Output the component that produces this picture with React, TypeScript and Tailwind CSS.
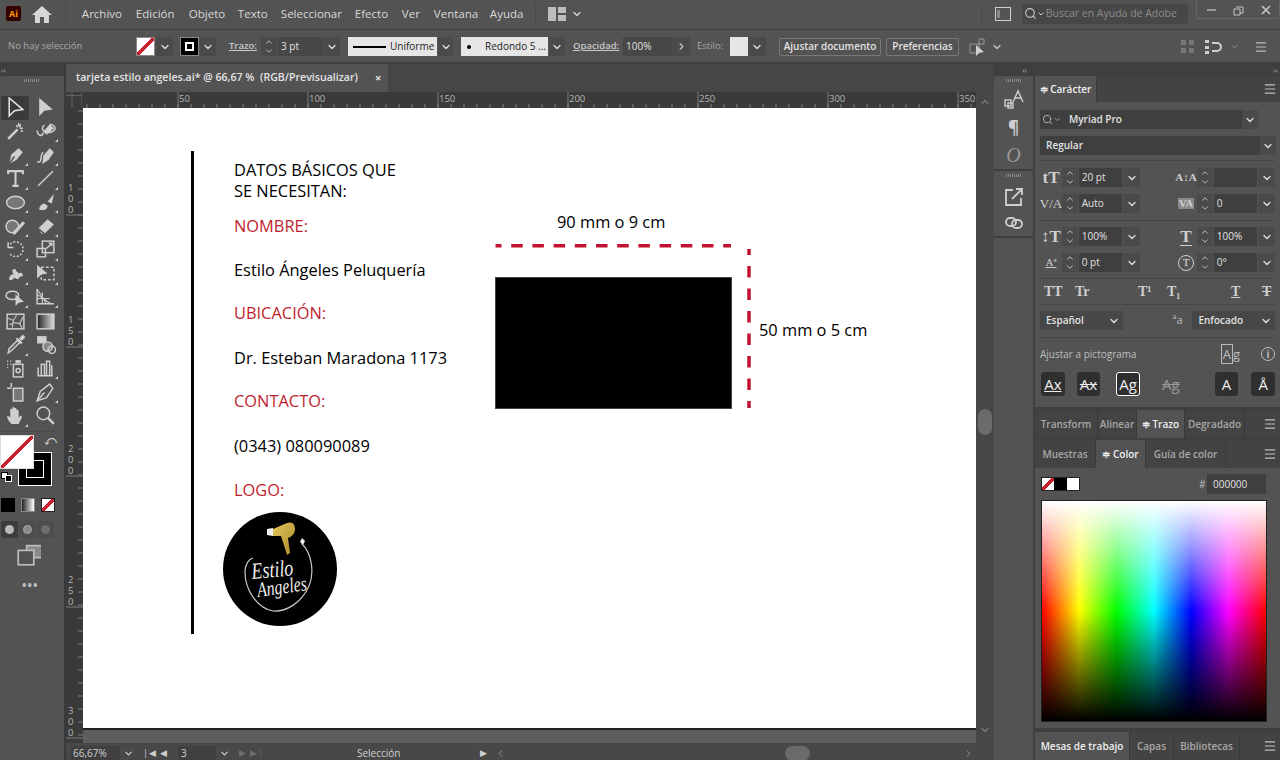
import React from "react";
import { ChevronDown, ChevronUp, ChevronRight, ChevronLeft, Menu, Search } from "lucide-react";

const menus = [
  ["Archivo", 54],
  ["Edición", 53],
  ["Objeto", 49],
  ["Texto", 43],
  ["Seleccionar", 74],
  ["Efecto", 47],
  ["Ver", 32],
  ["Ventana", 56],
  ["Ayuda", 45],
] as const;

function Chev({ className = "w-[16px]" }: { className?: string }) {
  return (
    <div className={`flex h-[19px] items-center justify-center bg-[#4a4a4a] ${className}`}>
      <ChevronDown size={12} strokeWidth={2.5} className="text-[#e0e0e0]" />
    </div>
  );
}

function Arrows() {
  return (
    <div className="flex h-full w-[16px] flex-col items-center justify-center bg-[#4a4a4a] text-[#d6d6d6]">
      <ChevronUp size={10} strokeWidth={2} className="-mb-[1px]" />
      <ChevronDown size={10} strokeWidth={2} />
    </div>
  );
}

function Stepper({ value }: { value: string }) {
  return (
    <div className="flex h-[19px] w-[78px] items-center gap-px text-[10px] text-[#e2e2e2]">
      <Arrows />
      <div className="flex h-full w-[44px] items-center bg-[#3f3f3f] pl-[3px]">{value}</div>
      <Chev className="w-[17px]" />
    </div>
  );
}

function Ico({ children, size = 20, vb = 20 }: { children: React.ReactNode; size?: number; vb?: number }) {
  return (
    <svg width={size} height={size} viewBox={`0 0 ${vb} ${vb}`} fill="none" stroke="#cfcfcf" strokeWidth="1.4">
      {children}
    </svg>
  );
}

const solid = { fill: "#cfcfcf", stroke: "none" };

const tools: { icon: React.ReactNode; more?: boolean; active?: boolean }[] = [
  { active: true, icon: <path d="M4 1 L4 18 L9 13 L17 12 Z" stroke="#e8e8e8" /> },
  { icon: <path d="M4 1 L4 18 L9 13 L17 12 Z" {...solid} /> },
  { icon: <><path d="M3 17 L12 8" strokeWidth="2.4" /><path d="M13 2v3M15 3l-1 3M17 7h-3M11 4l1 2M17 10l-2-1" /></> },
  { more: true, icon: <><path d="M2 9c1 6 5 6 6 2" /><path d="M8 10 L14 3 L18 7 L11 13 Z" {...solid} /><path d="M9 4a6 4 0 1 0 5-1" /></> },
  { more: true, icon: <><path d="M4 18 L6 9 L13 3 L17 7 L11 14 Z" {...solid} /><path d="M4 18 L9 11" stroke="#535353" /></> },
  { more: true, icon: <><path d="M2 16c6 2 2-8 6-9" /><path d="M7 18 L8 10 L14 3 L18 7 L13 14 Z" {...solid} /></> },
  { more: true, icon: <path d="M3 6V3h14v3M10 3v14M7 17h6" strokeWidth="2" /> },
  { more: true, icon: <path d="M3 17 L17 3" /> },
  { more: true, icon: <ellipse cx="10" cy="10" rx="8.5" ry="6" fill="#777" /> },
  { more: true, icon: <><path d="M12 9 L18 2 L16 11 Z" {...solid} /><path d="M4 17c0-4 3-6 5-6l3 2c0 3-3 5-8 4z" {...solid} /></> },
  { more: true, icon: <><circle cx="7" cy="10" r="6" fill="#777" /><path d="M8 17 L18 6" strokeWidth="3" /></> },
  { more: true, icon: <><path d="M3 12 L12 3 L18 8 L9 17 H6 Z" {...solid} /><path d="M3 12 L9 17" stroke="#535353" /></> },
  { more: true, icon: <><path d="M5 5a7 7 0 1 1-1 8" strokeDasharray="2 1.5" /><path d="M3 3v5h5" /></> },
  { more: true, icon: <><rect x="7" y="2" width="11" height="11" /><rect x="2" y="9" width="8" height="8" /><path d="M11 9l5-5M13 4h3v3" /></> },
  { more: true, icon: <path d="M4 16c0-5 2-4 4-6-2-2-1-5 2-4 1 3 2 2 3 4 3-2 4 0 4 3-2-1-3 0-4 2-2 1-3-1-4-1-1 1-3 3-5 2z" {...solid} /> },
  { more: true, icon: <><rect x="6" y="4" width="12" height="12" strokeDasharray="2.5 2" /><path d="M2 2 L2 15 L6 11 L12 10 Z" {...solid} /></> },
  { more: true, icon: <><ellipse cx="7" cy="8" rx="6" ry="4" /><path d="M10 7 L10 18 L13 15 L18 14 Z" {...solid} /></> },
  { more: true, icon: <><path d="M2 2v14h16" /><path d="M2 2l9 14M2 7l13 9M7 5v11M2 11h12" strokeWidth="1" /></> },
  { icon: <><rect x="2" y="3" width="16" height="14" /><path d="M3 7l5 2 3-5M8 9l-1 7M8 11l6 1 3-6M14 12l2 4M4 13l3-1" strokeWidth="1" /></> },
  { icon: <><defs><linearGradient id="tg"><stop stopColor="#222" /><stop offset="1" stopColor="#ddd" /></linearGradient></defs><rect x="2" y="3" width="16" height="14" fill="url(#tg)" /></> },
  { more: true, icon: <><path d="M3 18 L4 14 L12 6 L14 8 L6 16 Z" /><path d="M11 4l5 5M14 5l3-3 1 1-3 3" strokeWidth="2" /></> },
  { icon: <><rect x="2" y="2" width="9" height="7" {...solid} /><circle cx="12" cy="12" r="4.5" fill="#888" /><circle cx="16" cy="15" r="3.5" /></> },
  { icon: <><rect x="8" y="6" width="9" height="12" /><circle cx="12.5" cy="12" r="2" /><rect x="10" y="2" width="5" height="3" {...solid} /><path d="M2 3h1M5 3h1M2 6h1M5 6h1M2 9h1" /></> },
  { more: true, icon: <path d="M3 9v8h14M6 17V6h3v11M11 17V3h3v14M16 17V7" /> },
  { icon: <><path d="M8 6h9v12H8z" fill="#777" /><path d="M2 6h4M6 1v4" /></> },
  { more: true, icon: <><path d="M2 18 L5 9 L14 2 L17 6 L11 15 Z" /><path d="M2 18 L9 10" /></> },
  { more: true, icon: <path d="M6 18c-2-2-4-5-4-7 1-1 2 0 3 1V4c1-1 2 0 2 1V2.5c1-1 2-.5 2 .5 1-.5 2 0 2 1v1c1-1 2 0 2 1v6l2-2c1 0 1 1 1 2l-3 6z" {...solid} /> },
  { icon: <><circle cx="8" cy="8" r="6" /><path d="M12 12 L18 18" strokeWidth="2.2" /></> },
];

function Toolbar() {
  return (
    <div className="flex h-full w-[66px] shrink-0 flex-col border-r-2 border-[#3a3a3a] bg-[#535353]">
      <div className="flex h-[12px] items-center bg-[#3f3f3f] pl-[1px] text-[8px] leading-none text-[#bbb]">‹‹</div>
      <div className="mx-auto mt-[3px] h-[3px] w-[16px] bg-[repeating-linear-gradient(to_right,#8a8a8a_0,#8a8a8a_1px,transparent_1px,transparent_2px)]" />
      <div className="ml-[1px] mt-[14px] grid w-[58px] grid-cols-2 gap-x-[2px]">
        {tools.map((t, i) => (
          <div
            key={i}
            className={`relative flex h-[23.7px] w-[28px] items-center justify-center rounded-[2px] ${t.active ? "bg-[#3a3a3a]" : ""}`}
          >
            <Ico size={21}>{t.icon}</Ico>
            {t.more && <span className="absolute bottom-[1px] right-[1px] h-0 w-0 border-b-[3px] border-l-[3px] border-b-[#cfcfcf] border-l-transparent" />}
          </div>
        ))}
      </div>
      {/* fill and stroke */}
      <div className="relative mt-[3px] h-[62px] w-[60px] border-t border-[#4a4a4a]">
        <div className="absolute left-[18px] top-[20px] flex h-[34px] w-[34px] items-center justify-center border border-white bg-black">
          <div className="h-[18px] w-[18px] border border-white" />
        </div>
        <div className="absolute left-0 top-[3px] h-[34px] w-[34px] border border-[#ddd] bg-[linear-gradient(to_top_left,#fff_46%,#c8202f_46%,#c8202f_54%,#fff_54%)]" />
        <span className="absolute left-[44px] top-[3px] text-[12px] leading-none text-[#ddd]">⤺</span>
        <div className="absolute left-[1px] top-[40px] h-[7px] w-[7px] border border-black bg-white" />
        <div className="absolute left-[5px] top-[43px] h-[7px] w-[7px] border border-white bg-black" />
      </div>
      <div className="ml-[1px] mt-[5px] flex gap-[6px]">
        <div className="h-[14px] w-[14px] bg-black" />
        <div className="h-[14px] w-[14px] border border-[#888] bg-[linear-gradient(to_right,#222,#fff)]" />
        <div className="h-[14px] w-[14px] border border-[#222] bg-[linear-gradient(to_top_left,#fff_40%,#c8202f_40%,#c8202f_60%,#fff_60%)]" />
      </div>
      <div className="ml-[1px] mt-[9px] flex gap-px">
        <div className="flex h-[17px] w-[17px] items-center justify-center rounded-[2px] bg-[#3c3c3c]"><div className="h-[9px] w-[9px] rounded-full bg-[#bbb]" /></div>
        <div className="flex h-[17px] w-[17px] items-center justify-center rounded-[2px] bg-[#4d4d4d]"><div className="h-[9px] w-[9px] rounded-full border border-[#aaa] bg-[#888]" /></div>
        <div className="flex h-[17px] w-[17px] items-center justify-center rounded-[2px] bg-[#4d4d4d]"><div className="h-[9px] w-[9px] rounded-full bg-[#6e6e6e]" /></div>
      </div>
      <div className="ml-[17px] mt-[4px]">
        <Ico size={24}>
          <rect x="8" y="3" width="15" height="10" fill="#8a8a8a" stroke="#bdbdbd" />
          <rect x="1" y="7" width="13" height="12" fill="#535353" stroke="#bdbdbd" />
        </Ico>
      </div>
      <div className="ml-[22px] mt-[14px] text-[12px] font-bold leading-none tracking-[1px] text-[#bdbdbd]">•••</div>
    </div>
  );
}

function TopRuler() {
  const labels = [50, 100, 150, 200, 250, 300, 350];
  const ticks = Array.from({ length: 70 }, (_, i) => i * 13 + 5);
  return (
    <svg width="894" height="16" className="block shrink-0">
      {ticks.map((x) => (
        <line key={x} x1={x} x2={x} y1="12" y2="16" stroke="#7c7c7c" />
      ))}
      {labels.map((l, i) => (
        <g key={l}>
          <line x1={96 + i * 130} x2={96 + i * 130} y1="0" y2="16" stroke="#7c7c7c" />
          <text x={97 + i * 130} y="10" fontSize="9.5" fill="#b5b5b5">{l}</text>
        </g>
      ))}
    </svg>
  );
}

function LeftRuler() {
  const marks = [
    ["1", "0", "0", 107],
    ["1", "5", "0", 239],
    ["2", "0", "0", 368],
    ["2", "5", "0", 499],
    ["3", "0", "0", 630],
  ] as const;
  return (
    <svg width="17" height="635" className="block shrink-0 bg-[#3a3a3a]">
      {Array.from({ length: 49 }, (_, i) => i * 13 + 3).map((y) => (
        <line key={y} x1="12" x2="17" y1={y} y2={y} stroke="#7c7c7c" />
      ))}
      {marks.map((m) => (
        <g key={m[3]}>
          <line x1="0" x2="17" y1={m[3]} y2={m[3]} stroke="#7c7c7c" />
          {[0, 1, 2].map((d) => (
            <text key={d} x="2" y={m[3] - 24 + d * 11} fontSize="9.5" fill="#b5b5b5">{m[d]}</text>
          ))}
        </g>
      ))}
    </svg>
  );
}

function Logo() {
  return (
    <svg width="114" height="114" viewBox="0 0 114 114" className="absolute left-[140px] top-[404px]">
      <defs>
        <linearGradient id="gold" x1="0" y1="0" x2="1" y2="1">
          <stop stopColor="#e2c65a" />
          <stop offset="1" stopColor="#a98a2c" />
        </linearGradient>
      </defs>
      <circle cx="57" cy="57" r="57" fill="#000" />
      <path d="M50 17 L64 11 C70 9 72 13 72 17 C72 22 68 25 65 26 L67 41 L64 43 C62 36 60 30 58 24 L50 24 Z" fill="url(#gold)" />
      <path d="M44 17 L50 16 L50 24 L44 23 Z" fill="#eee" />
      <path d="M79 32 C88 40 92 60 86 74 C78 92 62 100 50 99 C34 96 22 78 22 60 C22 52 26 47 30 46" stroke="#c8c8c8" strokeWidth="1.2" fill="none" />
      <path d="M77 30 L79 26 L82 29 L80 33 Z" fill="#eee" />
      <text x="29" y="67" fontSize="23" fontStyle="italic" fill="#eee" fontFamily="'Liberation Serif', serif" textLength="42" lengthAdjust="spacingAndGlyphs" transform="rotate(-5 29 67)">Estilo</text>
      <text x="35" y="85" fontSize="21" fontStyle="italic" fill="#eee" fontFamily="'Liberation Serif', serif" textLength="50" lengthAdjust="spacingAndGlyphs" transform="rotate(-8 35 85)">Angeles</text>
    </svg>
  );
}

const labelCls = "absolute whitespace-nowrap text-[16.4px] leading-[22px]";

function Artboard() {
  const items: [string, number, boolean][] = [
    ["DATOS BÁSICOS QUE", 51, false],
    ["SE NECESITAN:", 72, false],
    ["NOMBRE:", 107, true],
    ["Estilo Ángeles Peluquería", 151, false],
    ["UBICACIÓN:", 194, true],
    ["Dr. Esteban Maradona 1173", 239, false],
    ["CONTACTO:", 282, true],
    ["(0343) 080090089", 327, false],
    ["LOGO:", 371, true],
  ];
  return (
    <div className="relative h-[622px] w-full shrink-0 overflow-hidden border-b-2 border-[#222] bg-white text-black">
      <div className="absolute left-[108px] top-[43px] h-[483px] w-[3px] bg-black" />
      {items.map(([t, top, red]) => (
        <div key={t} className={`${labelCls} left-[151px] ${red ? "text-[#bf1e2e]" : "text-black"}`} style={{ top }}>
          {t}
        </div>
      ))}
      <div className={`${labelCls} left-[474px] top-[103px]`}>90 mm o 9 cm</div>
      <div className={`${labelCls} left-[676px] top-[211px]`}>50 mm o 5 cm</div>
      <svg width="260" height="166" className="absolute left-[410px] top-[135px]">
        <line x1="2.5" x2="238" y1="2.7" y2="2.7" stroke="#c1122f" strokeWidth="3.5" strokeDasharray="11.5 9.7" strokeDashoffset="5.5" />
        <line x1="256" x2="256" y1="6" y2="165" stroke="#c1122f" strokeWidth="3.5" strokeDasharray="11.5 11" strokeDashoffset="5.5" />
      </svg>
      <div className="absolute left-[412px] top-[169px] h-[132px] w-[237px] border border-[#444] bg-black" />
      <Logo />
    </div>
  );
}

function Document() {
  return (
    <div className="flex h-full w-[928px] shrink-0 flex-col">
      <div className="flex h-[28px] shrink-0 items-stretch bg-[#464646]">
        <div className="flex w-[322px] items-center bg-[#535353] pl-[10px] text-[10.6px] font-semibold text-[#e4e4e4]">
          <span className="w-[299px] whitespace-pre">tarjeta estilo angeles.ai* @ 66,67 %  (RGB/Previsualizar)</span>
          <span className="text-[11px] font-bold text-[#e4e4e4]">×</span>
        </div>
      </div>
      <div className="flex h-[16px] shrink-0 bg-[#3a3a3a]">
        <svg width="16" height="16" className="block shrink-0">
          <path d="M6 0V16M16 0V16M0 3.5H16" stroke="#666" fill="none" />
        </svg>
        <TopRuler />
        <div className="h-full w-[18px] bg-[#474747]" />
      </div>
      <div className="flex h-[635px] shrink-0">
        <LeftRuler />
        <div className="flex w-[893px] shrink-0 flex-col bg-[#5e5e5e]">
          <Artboard />
        </div>
        <div className="flex w-[18px] shrink-0 flex-col items-center bg-[#474747] text-[#a8a8a8]">
          <ChevronUp size={12} className="mt-[-12px]" />
          <div className="mt-[301px] h-[26px] w-[14px] rounded-full bg-[#6b6b6b]" />
          <div className="flex-1" />
          <ChevronDown size={12} className="mb-[7px]" />
        </div>
      </div>
      <div className="flex h-[17px] shrink-0 items-center bg-[#484848] pt-[3px] text-[10px] text-[#d0d0d0]">
        <div className="ml-[5px] flex h-full w-[49px] items-center bg-[#3f3f3f] pl-[2px]">66,67%</div>
        <ChevronDown size={11} strokeWidth={2.5} className="ml-[3px]" />
        <span className="ml-[9px] w-[30px] text-[9px] tracking-[1px]">|◀ ◀</span>
        <div className="ml-[5px] flex h-full w-[38px] items-center bg-[#3f3f3f] pl-[3px]">3</div>
        <ChevronDown size={11} strokeWidth={2.5} className="ml-[3px]" />
        <span className="ml-[9px] w-[28px] text-[9px] tracking-[1px] text-[#6e6e6e]">▶ ▶|</span>
        <span className="ml-[90px] w-[123px]">Selección</span>
        <span className="text-[9px]">▶</span>
        <ChevronLeft size={11} className="ml-[8px] text-[#999]" />
        <div className="ml-[279px] h-[15px] w-[25px] rounded-full bg-[#6b6b6b]" />
        <ChevronRight size={11} className="ml-[153px] text-[#999]" />
      </div>
    </div>
  );
}

function Dock() {
  return (
    <div className="flex h-full w-[41px] shrink-0 flex-col border-r-2 border-[#3f3f3f] bg-[#535353] text-[#cfcfcf]">
      <div className="flex h-[12px] items-center justify-end bg-[#3f3f3f] pr-[6px] text-[8px] leading-none text-[#bbb]">‹‹</div>
      <div className="flex h-[95px] flex-col items-center border-b-2 border-[#3f3f3f] pt-[3px]">
        <div className="h-[3px] w-[16px] bg-[repeating-linear-gradient(to_right,#8a8a8a_0,#8a8a8a_1px,transparent_1px,transparent_2px)]" />
        <div className="mt-[7px]"><Ico size={20}><rect x="1" y="11" width="6" height="6" /><rect x="4" y="14" width="5" height="5" /><path d="M9 13 L14 2 L19 13M11 9h6" /></Ico></div>
        <span className="mt-[10px] text-[17px] font-bold leading-none">¶</span>
        <span className="mt-[9px] font-['Liberation_Serif',serif] text-[20px] italic leading-none text-[#999]">O</span>
      </div>
      <div className="flex h-[67px] flex-col items-center border-b-2 border-[#3f3f3f] pt-[3px]">
        <div className="h-[3px] w-[16px] bg-[repeating-linear-gradient(to_right,#8a8a8a_0,#8a8a8a_1px,transparent_1px,transparent_2px)]" />
        <div className="mt-[10px]"><Ico size={20}><path d="M9 3H2v15h15v-7" strokeWidth="1.8" /><path d="M8 12 L17 3M12 2h6v6" strokeWidth="1.8" /></Ico></div>
        <div className="mt-[6px]"><Ico size={20}><rect x="2" y="5" width="10" height="8" rx="4" strokeWidth="1.8" /><rect x="8" y="7" width="10" height="8" rx="4" strokeWidth="1.8" /></Ico></div>
      </div>
    </div>
  );
}

function Glyph({ children, cls = "" }: { children: React.ReactNode; cls?: string }) {
  return <span className={`font-['Liberation_Serif',serif] leading-none text-[#cfcfcf] ${cls}`}>{children}</span>;
}

function CharRow({ left, lv, right, rv }: { left: React.ReactNode; lv: string; right: React.ReactNode; rv: string }) {
  return (
    <div className="flex h-[19px] items-center">
      <div className="flex w-[22px] justify-center">{left}</div>
      <Stepper value={lv} />
      <div className="ml-[35px] flex w-[22px] justify-center">{right}</div>
      <Stepper value={rv} />
    </div>
  );
}

function TabRow({ tabs, h = 28 }: { tabs: { t: string; w: number; on?: boolean }[]; h?: number }) {
  return (
    <div className="flex shrink-0 items-stretch bg-[#434343] text-[10px] font-semibold" style={{ height: h }}>
      {tabs.map((x) => (
        <div
          key={x.t}
          className={`flex items-center justify-center border-r border-[#3a3a3a] ${x.on ? "bg-[#535353] text-[#f0f0f0]" : "text-[#a8a8a8]"}`}
          style={{ width: x.w }}
        >
          {x.t}
        </div>
      ))}
      <div className="flex flex-1 items-center justify-end pr-[3px]">
        <Menu size={14} className="text-[#c0c0c0]" />
      </div>
    </div>
  );
}

function CharPanel() {
  return (
    <div className="h-[305px] shrink-0 bg-[#535353] px-[5px] text-[10px] text-[#e2e2e2]">
      <div className="flex h-[8px]" />
      <div className="flex h-[19px] w-[218px] items-center bg-[#3f3f3f] font-semibold">
        <Search size={11} className="ml-[2px] text-[#bbb]" />
        <ChevronDown size={9} className="mr-[7px] text-[#bbb]" />
        Myriad Pro
        <div className="flex-1" />
        <Chev />
      </div>
      <div className="mt-[7px] flex h-[19px] w-[236px] items-center bg-[#3f3f3f] pl-[6px] font-semibold">
        Regular
        <div className="flex-1" />
        <Chev />
      </div>
      <div className="mt-[5px] border-t border-[#474747] pt-[7px]">
        <div className="flex flex-col gap-[7px]">
          <CharRow left={<Glyph cls="text-[17px] font-bold">tT</Glyph>} lv="20 pt" right={<Glyph cls="text-[11px] font-bold">A↕A</Glyph>} rv="" />
          <CharRow left={<Glyph cls="text-[13px]">V/A</Glyph>} lv="Auto" right={<Glyph cls="bg-[#8a8a8a] px-[1px] text-[11px] font-bold text-[#444]">VA</Glyph>} rv="0" />
        </div>
      </div>
      <div className="mt-[7px] border-t border-[#474747] pt-[6px]">
        <div className="flex flex-col gap-[7px]">
          <CharRow left={<Glyph cls="text-[17px] font-bold">↕T</Glyph>} lv="100%" right={<Glyph cls="border-b border-[#cfcfcf] text-[17px] font-bold">T</Glyph>} rv="100%" />
          <CharRow left={<Glyph cls="text-[11px] underline">Aª</Glyph>} lv="0 pt" right={<span className="flex h-[16px] w-[16px] items-center justify-center rounded-full border border-[#cfcfcf] font-['Liberation_Serif',serif] text-[11px]">T</span>} rv="0°" />
        </div>
      </div>
      <div className="mt-[6px] flex h-[26px] items-center border-t border-[#474747] font-['Liberation_Serif',serif] text-[14px] font-semibold text-[#cfcfcf]">
        <span className="ml-[4px] w-[31px]">TT</span>
        <span className="w-[63px]">Tr</span>
        <span className="w-[29px]">T¹</span>
        <span className="w-[64px]">T₁</span>
        <span className="w-[31px] underline">T</span>
        <span className="line-through">T</span>
      </div>
      <div className="flex items-center border-t border-[#474747] pt-[6px] font-semibold">
        <div className="flex h-[19px] w-[83px] items-center justify-between bg-[#474747] pl-[6px] pr-[3px]">
          Español <ChevronDown size={12} strokeWidth={2.5} />
        </div>
        <span className="ml-[50px] w-[20px] text-[11px] font-normal text-[#bbb]">ªa</span>
        <div className="flex h-[19px] w-[83px] items-center justify-between bg-[#474747] pl-[6px] pr-[3px]">
          Enfocado <ChevronDown size={12} strokeWidth={2.5} />
        </div>
      </div>
      <div className="mt-[7px] flex h-[28px] items-center border-t border-[#474747] pt-[5px] text-[#bdbdbd]">
        <span className="w-[183px]">Ajustar a pictograma</span>
        <span className="w-[41px] text-[13px] leading-none"><span className="border border-[#bbb] px-[1px]">A</span>g</span>
        <span className="flex h-[14px] w-[14px] items-center justify-center rounded-full border border-[#bbb] text-[10px] font-bold">i</span>
      </div>
      <div className="mt-[7px] flex items-center pl-px text-[15px] text-[#eee]">
        <div className="flex h-[24px] w-[24px] items-center justify-center rounded-[3px] bg-[#2f2f2f] underline">Ax</div>
        <div className="ml-[12px] flex h-[24px] w-[24px] items-center justify-center rounded-[3px] bg-[#2f2f2f] line-through">Ax</div>
        <div className="ml-[16px] flex h-[24px] w-[24px] items-center justify-center rounded-[3px] border border-white bg-[#2f2f2f]">Ag</div>
        <div className="ml-[19px] flex h-[24px] w-[24px] items-center justify-center text-[#999] line-through">Ag</div>
        <div className="ml-[32px] flex h-[24px] w-[24px] items-center justify-center rounded-[3px] bg-[#2f2f2f]">A</div>
        <div className="ml-[13px] flex h-[24px] w-[24px] items-center justify-center rounded-[3px] bg-[#2f2f2f]">Å</div>
      </div>
    </div>
  );
}

function ColorPanel() {
  return (
    <div className="h-[260px] shrink-0 bg-[#535353] pl-[6px]">
      <div className="flex h-[32px] items-center">
        <div className="flex h-[14px] w-[39px] border border-[#222]">
          <div className="w-[13px] bg-[linear-gradient(to_bottom_right,#fff_40%,#c8202f_40%,#c8202f_60%,#fff_60%)]" />
          <div className="w-[13px] bg-black" />
          <div className="w-[13px] bg-white" />
        </div>
        <span className="ml-[119px] w-[8px] text-[10px] text-[#bbb]">#</span>
        <div className="flex h-[20px] w-[59px] items-center bg-[#3f3f3f] pl-[6px] text-[10px] text-[#e2e2e2]">000000</div>
      </div>
      <div className="h-[222px] w-[226px] border border-[#222] bg-[linear-gradient(to_bottom,#fff,transparent_50%,#000),linear-gradient(to_right,#f00,#ff0,#0f0,#0ff,#00f,#f0f,#f00)]" />
    </div>
  );
}

function RightPanel() {
  return (
    <div className="flex h-full w-[245px] shrink-0 flex-col overflow-hidden bg-[#3f3f3f]">
      <div className="flex h-[12px] shrink-0 items-center justify-end pr-[2px] text-[8px] leading-none text-[#bbb]">››</div>
      <TabRow h={26} tabs={[{ t: "≑ Carácter", w: 62, on: true }]} />
      <CharPanel />
      <div className="h-[3px] shrink-0" />
      <TabRow tabs={[{ t: "Transform", w: 63 }, { t: "Alinear", w: 39 }, { t: "≑ Trazo", w: 48, on: true }, { t: "Degradado", w: 60 }]} />
      <div className="h-[2px] shrink-0" />
      <TabRow tabs={[{ t: "Muestras", w: 61 }, { t: "≑ Color", w: 50, on: true }, { t: "Guía de color", w: 80 }]} />
      <ColorPanel />
      <div className="h-[4px] shrink-0" />
      <TabRow tabs={[{ t: "Mesas de trabajo", w: 95, on: true }, { t: "Capas", w: 44 }, { t: "Bibliotecas", w: 66 }]} />
    </div>
  );
}

function TopBars() {
  return (
    <>
      <div className="flex h-[30px] items-center border-b border-[#3f3f3f] bg-[#535353] pb-[2px] text-[11.5px] text-[#d8d8d8]">
        <div className="ml-[6px] flex h-[15px] w-[15px] items-center justify-center rounded-[2px] bg-[#330000] text-[9px] font-bold text-[#ff9a00]">Ai</div>
        <svg width="20" height="18" viewBox="0 0 20 18" className="ml-[11px]">
          <path d="M10 1 L20 10 H17 V18 H12 V12 H8 V18 H3 V10 H0 Z" fill="#d6d6d6" />
        </svg>
        <div className="ml-[13px] h-[24px] w-px bg-[#4a4a4a]" />
        <div className="ml-[16px] flex">
          {menus.map(([m, w]) => (
            <span key={m} style={{ width: w }}>{m}</span>
          ))}
        </div>
        <div className="h-[24px] w-px bg-[#4a4a4a]" />
        <svg width="18" height="14" className="ml-[12px]">
          <rect x="0" y="0" width="8" height="14" fill="#bdbdbd" />
          <rect x="10" y="0" width="8" height="6" fill="#bdbdbd" />
          <rect x="10" y="8" width="8" height="6" fill="#bdbdbd" />
        </svg>
        <ChevronDown size={12} strokeWidth={2.5} className="ml-[5px]" />
        <div className="ml-[398px] h-[24px] w-px bg-[#4a4a4a]" />
        <svg width="16" height="14" className="ml-[13px]">
          <rect x="0.5" y="0.5" width="15" height="13" fill="none" stroke="#cfcfcf" />
          <rect x="2" y="3" width="3" height="8" fill="#888" />
        </svg>
        <div className="ml-[11px] flex h-[20px] w-[167px] items-center rounded-[2px] bg-[#474747] text-[10.5px] text-[#8c8c8c]">
          <Search size={13} className="ml-[2px] text-[#ccc]" />
          <ChevronDown size={8} strokeWidth={3} className="mr-[1px] text-[#ccc]" />
          Buscar en Ayuda de Adobe
        </div>
        <div className="mb-[7px] ml-[8px] flex h-[17px] items-center rounded-b-[2px] border border-t-0 border-[#666] text-[#c8c8c8]">
          <span className="flex w-[28px] justify-center"><span className="h-[2px] w-[9px] bg-[#999]" /></span>
          <svg width="28" height="12" viewBox="0 0 28 12"><path d="M11 3h7v6h-3M9 5h6v6H9z" fill="none" stroke="#c8c8c8" /></svg>
          <svg width="26" height="12" viewBox="0 0 26 12"><path d="M9 2l8 8M17 2l-8 8" stroke="#c8c8c8" strokeWidth="1.5" /></svg>
        </div>
      </div>
      <div className="flex h-[34px] items-center border-b-2 border-[#3f3f3f] bg-[#535353] pt-[1px] text-[9.5px] text-[#c8c8c8]">
        <span className="ml-[8px] w-[128px] text-[#a8a8a8]">No hay selección</span>
        <div className="h-[19px] w-[19px] border border-[#888] bg-[linear-gradient(to_bottom_right,#fff_44%,#c8202f_44%,#c8202f_56%,#fff_56%)]" />
        <Chev className="ml-px w-[17px]" />
        <div className="ml-[7px] flex h-[19px] w-[19px] items-center justify-center border border-[#888] bg-black">
          <div className="flex h-[9px] w-[9px] items-center justify-center border-2 border-white" />
        </div>
        <Chev className="ml-px w-[16px]" />
        <span className="ml-[13px] w-[32px] font-semibold underline">Trazo:</span>
        <div className="flex h-[19px] items-center gap-px text-[10px] text-[#e2e2e2]">
          <Arrows />
          <div className="flex h-full w-[45px] items-center bg-[#474747] pl-[3px]">3 pt</div>
          <Chev className="w-[16px]" />
        </div>
        <div className="ml-[8px] flex h-[19px] w-[89px] items-center bg-[#e6e6e6] text-[10px] text-[#222]">
          <div className="ml-[5px] h-[2px] w-[33px] bg-black" />
          <span className="ml-[4px]">Uniforme</span>
        </div>
        <Chev className="ml-px w-[15px]" />
        <div className="ml-[8px] flex h-[19px] w-[87px] items-center bg-[#e6e6e6] text-[10px] text-[#222]">
          <span className="ml-[6px] h-[4px] w-[4px] rounded-full bg-black" />
          <span className="ml-[14px]">Redondo 5 ...</span>
        </div>
        <Chev className="ml-px w-[16px]" />
        <span className="ml-[8px] w-[50px] font-semibold underline">Opacidad:</span>
        <div className="flex h-[19px] w-[49px] items-center bg-[#474747] pl-[3px] text-[10px] text-[#e2e2e2]">100%</div>
        <div className="flex h-[19px] w-[18px] items-center justify-center bg-[#4a4a4a]"><ChevronRight size={11} strokeWidth={2.5} /></div>
        <span className="ml-[7px] w-[33px] text-[#a8a8a8]">Estilo:</span>
        <div className="h-[19px] w-[18px] bg-[#e6e6e6]" />
        <Chev className="w-[18px]" />
        <div className="ml-[13px] flex h-[18px] w-[102px] items-center justify-center rounded-[2px] border border-[#777] text-[10px] font-semibold text-[#e2e2e2]">Ajustar documento</div>
        <div className="ml-[5px] flex h-[18px] w-[73px] items-center justify-center rounded-[2px] border border-[#777] text-[10px] font-semibold text-[#e2e2e2]">Preferencias</div>
        <svg width="18" height="18" viewBox="0 0 18 18" className="ml-[10px]">
          <path d="M1 6h9v9H1z M10 1h5v5h-5z" fill="none" stroke="#999" />
          <path d="M7 7 L7 18 L10 15 L15 14 Z" fill="#cfcfcf" />
        </svg>
        <ChevronDown size={12} strokeWidth={2.5} className="ml-[4px]" />
        <svg width="14" height="14" className="ml-[178px]">
          <rect width="5" height="5" fill="#777" /><rect x="8" width="5" height="5" fill="#777" />
          <rect y="8" width="5" height="5" fill="#777" /><rect x="8" y="8" width="5" height="5" fill="#777" />
        </svg>
        <svg width="18" height="16" className="ml-[10px]">
          <rect x="0" y="1" width="4" height="3" fill="#cfcfcf" /><rect x="0" y="7" width="4" height="3" fill="#cfcfcf" /><rect x="0" y="12" width="4" height="3" fill="#cfcfcf" />
          <path d="M7 4h5a4 4 0 0 1 0 8H7" fill="none" stroke="#cfcfcf" strokeWidth="2" />
        </svg>
        <ChevronDown size={11} className="ml-[6px] text-[#8a8a8a]" />
        <Menu size={14} className="ml-[14px] text-[#bdbdbd]" />
      </div>
    </>
  );
}

export default function App() {
  return (
    <div className="h-[760px] w-[1280px] overflow-hidden bg-[#535353] font-['Open_Sans','Noto_Sans',sans-serif]">
      <TopBars />
      <div className="flex h-[696px]">
        <Toolbar />
        <Document />
        <Dock />
        <RightPanel />
      </div>
    </div>
  );
}
